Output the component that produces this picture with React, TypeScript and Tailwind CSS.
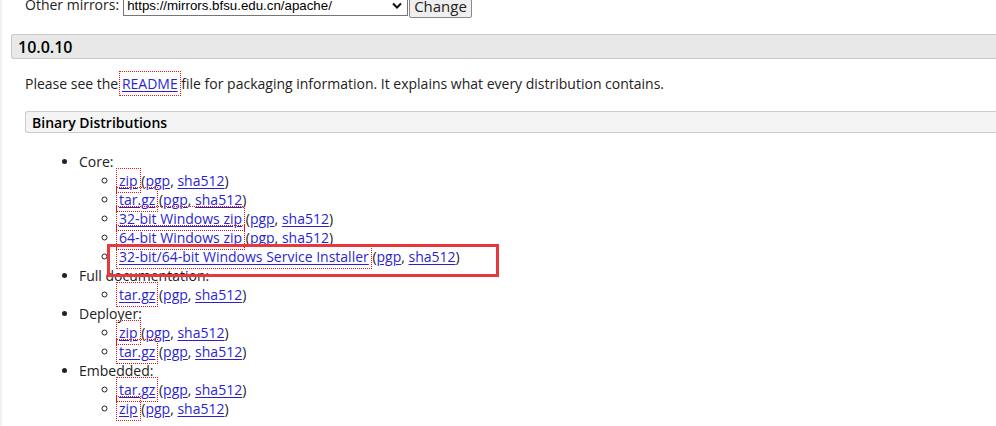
import React from "react";

type Item = { label: string; outline?: boolean };

const core: Item[] = [
  { label: "zip", outline: true },
  { label: "tar.gz", outline: true },
  { label: "32-bit Windows zip", outline: true },
  { label: "64-bit Windows zip", outline: true },
  { label: "32-bit/64-bit Windows Service Installer", outline: true },
];

const groups: { name: string; items: Item[] }[] = [
  { name: "Core:", items: core },
  { name: "Full documentation:", items: [{ label: "tar.gz", outline: true }] },
  {
    name: "Deployer:",
    items: [
      { label: "zip", outline: true },
      { label: "tar.gz", outline: true },
    ],
  },
  {
    name: "Embedded:",
    items: [
      { label: "tar.gz", outline: true },
      { label: "zip", outline: true },
    ],
  },
];

function Link({ children, outline }: { children: React.ReactNode; outline?: boolean }) {
  return (
    <a
      href="#"
      className={
        "text-[#2b1fd6] underline underline-offset-2 " +
        (outline ? "outline-1 outline-dotted outline-[#e0161c] outline-offset-[2px]" : "")
      }
    >
      {children}
    </a>
  );
}

function Download({ item }: { item: Item }) {
  return (
    <li className="leading-[19px]">
      <Link outline={item.outline}>{item.label}</Link> (
      <Link>pgp</Link>, <Link>sha512</Link>)
    </li>
  );
}

export default function App() {
  return (
    <div
      className="relative h-[426px] w-[996px] overflow-hidden bg-white text-[14px] text-[#222] border-l-2 border-[#f1f1f1]"
      style={{ fontFamily: '"Open Sans", "Liberation Sans", sans-serif' }}
    >
      {/* mirror picker, cut off by the scroll */}
      <div className="-mt-[5px] flex items-start pl-[23px]">
        <span className="leading-[19px]">Other mirrors:</span>
        <div
          className="ml-[4px] flex h-[21px] w-[285px] items-center justify-between border border-[#767676] bg-white pl-[3px] pr-[5px] text-[13.3px] text-black"
          style={{ fontFamily: '"Liberation Sans", Arial, sans-serif' }}
        >
          <span>https://mirrors.bfsu.edu.cn/apache/</span>
          <svg width="10" height="7" viewBox="0 0 10 7">
            <path d="M1 1.5 5 5.5 9 1.5" fill="none" stroke="#111" strokeWidth="2" />
          </svg>
        </div>
        <button className="ml-[1px] h-[23px] rounded-[2px] border border-[#8a8a8a] bg-[#efefef] px-[4px] text-[15px] leading-[19px] text-[#222]">
          Change
        </button>
      </div>

      <div className="ml-[9px] mt-[16px] flex h-[25px] items-center rounded-l-[3px] border border-r-0 border-[#c8c8c8] bg-[#e8e8e8] pl-[6px] text-[16px] font-semibold text-black">
        10.0.10
      </div>

      <p className="ml-[23px] mt-[15px] leading-[19px]">
        Please see the <Link outline>README</Link> file for packaging information. It explains what every
        distribution contains.
      </p>

      <div className="ml-[23px] mt-[18px] flex h-[22px] items-center rounded-l-[3px] border border-r-0 border-[#cccccc] bg-[#f4f4f4] pl-[6px] font-semibold text-black">
        Binary Distributions
      </div>

      <ul className="mt-[19px] list-disc pl-[77px]">
        {groups.map((g) => (
          <li key={g.name} className="leading-[19px]">
            {g.name}
            <ul className="list-[circle] pl-[40px]">
              {g.items.map((it, i) => (
                <Download key={i} item={it} />
              ))}
            </ul>
          </li>
        ))}
      </ul>

      {/* annotation box */}
      <div className="absolute left-[105px] top-[244px] h-[33px] w-[392px] border-[3px] border-[#e8383d]" />
    </div>
  );
}
